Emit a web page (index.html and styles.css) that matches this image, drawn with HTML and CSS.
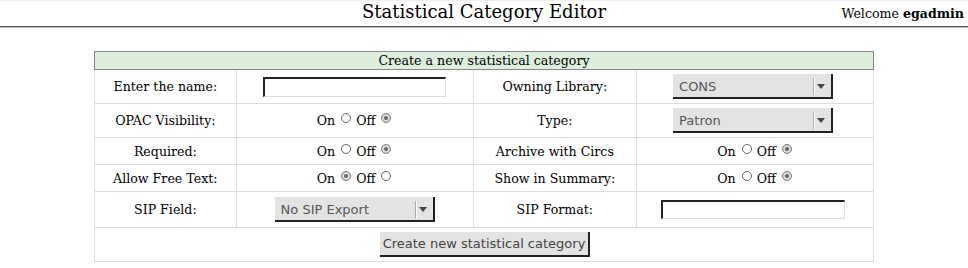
FILE: index.html
```html
<!DOCTYPE html>
<html lang="en">
<head>
    <meta charset="UTF-8">
    <title>Statistical Category Editor</title>
    <link rel="stylesheet" href="styles.css">
</head>
<body>
    <div class="topbar">
        <h1>Statistical Category Editor</h1>
        <div class="welcome">Welcome <b>egadmin</b></div>
    </div>

    <table class="stat-form">
        <colgroup>
            <col class="c1"><col class="c2"><col class="c3"><col class="c4">
        </colgroup>
        <tr class="head-row">
            <td colspan="4">Create a new statistical category</td>
        </tr>
        <tr class="tall">
            <td>Enter the name:</td>
            <td><input type="text" class="name-input"></td>
            <td>Owning Library:</td>
            <td>
                <span class="select-wrap shift"><select><option>CONS</option></select></span>
            </td>
        </tr>
        <tr class="tall">
            <td>OPAC Visibility:</td>
            <td>On <input type="radio" name="opac"> Off <input type="radio" name="opac" checked></td>
            <td>Type:</td>
            <td>
                <span class="select-wrap shift"><select><option>Patron</option></select></span>
            </td>
        </tr>
        <tr class="short">
            <td>Required:</td>
            <td>On <input type="radio" name="req"> Off <input type="radio" name="req" checked></td>
            <td>Archive with Circs</td>
            <td>On <input type="radio" name="arc"> Off <input type="radio" name="arc" checked></td>
        </tr>
        <tr class="short">
            <td>Allow Free Text:</td>
            <td>On <input type="radio" name="free" checked> Off <input type="radio" name="free"></td>
            <td>Show in Summary:</td>
            <td>On <input type="radio" name="sum"> Off <input type="radio" name="sum" checked></td>
        </tr>
        <tr class="sip">
            <td>SIP Field:</td>
            <td>
                <span class="select-wrap"><select><option>No SIP Export</option></select></span>
            </td>
            <td>SIP Format:</td>
            <td><input type="text" class="sip-input"></td>
        </tr>
        <tr class="tall">
            <td colspan="4"><button type="button">Create new statistical category</button></td>
        </tr>
    </table>
</body>
</html>
```

FILE: styles.css
```css
body {
    margin: 0;
    font-family: "DejaVu Serif", serif;
    font-size: 12.6px;
    color: #000;
    background: #fff;
}

.topbar {
    position: relative;
    height: 25px;
    border-bottom: 1px solid #555;
    box-shadow: 0 1px 0 #bbb;
    border-top: 1px solid #f0f0f0;
}

.topbar h1 {
    margin: 0;
    text-align: center;
    font-size: 18px;
    font-weight: normal;
    line-height: 22px;
}

.welcome {
    position: absolute;
    right: 4px;
    top: 5px;
}

.stat-form {
    width: 780px;
    margin: 24px auto 0;
    border-collapse: collapse;
    text-align: center;
}

.c1 { width: 142px; }
.c2 { width: 237px; }
.c3 { width: 164px; }
.c4 { width: 237px; }

.stat-form td {
    border: 1px solid #ddd;
    padding: 0;
}

.head-row td {
    background: #ddeedd;
    border: 1px solid #888;
    height: 17px;
    line-height: 16px;
}

.tall td { height: 33px; }
.short td { height: 26px; }
.sip td { height: 35px; }

.name-input, .sip-input {
    box-sizing: border-box;
    border-top: 2px solid #222;
    border-left: 2px solid #222;
    border-right: 1px solid #ddd;
    border-bottom: 1px solid #ddd;
    outline: none;
    padding: 0 2px;
}

.name-input { width: 183px; height: 20px; }
.sip-input { width: 184px; height: 19px; margin-right: 4px; }

.select-wrap {
    position: relative;
    display: inline-block;
    vertical-align: middle;
}

.select-wrap.shift { margin-right: 4px; }

.select-wrap select {
    -webkit-appearance: none;
    appearance: none;
    width: 160px;
    height: 25px;
    background: #e3e3e3;
    border: none;
    border-right: 2px solid #222;
    border-bottom: 2px solid #222;
    border-radius: 0;
    font-family: "DejaVu Sans", sans-serif;
    font-size: 13px;
    color: #555;
    padding: 1px 0 0 6px;
    outline: none;
}

.select-wrap::before {
    content: "";
    position: absolute;
    right: 19px;
    top: 4px;
    height: 17px;
    border-left: 1px solid #aaa;
    box-shadow: 1px 0 0 #fff;
}

.select-wrap::after {
    content: "";
    position: absolute;
    right: 8px;
    top: 10px;
    border-left: 4px solid transparent;
    border-right: 4px solid transparent;
    border-top: 5px solid #444;
}

input[type="radio"] {
    -webkit-appearance: none;
    appearance: none;
    width: 10px;
    height: 10px;
    margin: 0 1px 0 2px;
    border: 1px solid #666;
    border-radius: 50%;
    background: #fff;
    vertical-align: 2px;
}

input[type="radio"]:checked {
    background: #666;
    box-shadow: inset 0 0 0 2px #ddd;
    border-color: #888;
}

button {
    font-family: "DejaVu Sans", sans-serif;
    font-size: 13px;
    color: #444;
    background: #e3e3e3;
    border: none;
    border-right: 2px solid #222;
    border-bottom: 2px solid #222;
    border-radius: 0;
    width: 210px;
    height: 25px;
    padding: 0;
    margin-left: 2px;
}
```
